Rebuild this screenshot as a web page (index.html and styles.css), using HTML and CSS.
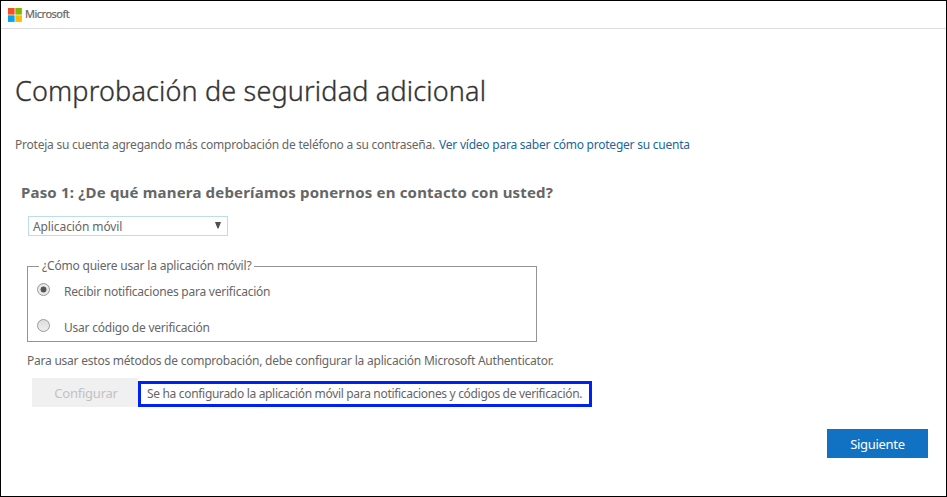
FILE: index.html
```html
<!DOCTYPE html>
<html lang="es">
<head>
<meta charset="utf-8">
<title>Comprobación de seguridad adicional</title>
<link rel="stylesheet" href="styles.css">
</head>
<body>
<div class="page">
  <header class="header">
    <svg class="logo" viewBox="0 0 14 14" aria-hidden="true">
      <path fill="#f25022" d="M0 0h6.6v6.6H0z"/>
      <path fill="#7fba00" d="M7.3 0h6.6v6.6H7.3z"/>
      <path fill="#00a4ef" d="M0 7.3h6.6v6.6H0z"/>
      <path fill="#ffb900" d="M7.3 7.3h6.6v6.6H7.3z"/>
    </svg>
    <span class="brand">Microsoft</span>
  </header>
  <main class="main">
    <h1 class="title"><span>Comprobación de seguridad adicional</span></h1>
    <p class="intro"><span class="intro-text">Proteja su cuenta agregando más comprobación de teléfono a su contraseña.</span><a class="link">Ver vídeo para saber cómo proteger su cuenta</a></p>
    <h2 class="step"><span>Paso 1: ¿De qué manera deberíamos ponernos en contacto con usted?</span></h2>
    <div class="select"><span class="select-text">Aplicación móvil</span>
      <svg class="arrow" viewBox="0 0 6 7"><path fill="#505050" d="M0 0h6L3.5 6.5h-1z"/></svg>
    </div>
    <fieldset class="options">
      <legend class="legend">¿Cómo quiere usar la aplicación móvil?</legend>
      <div class="option"><i class="radio radio-on"></i><span class="opt1">Recibir notificaciones para verificación</span></div>
      <div class="option"><i class="radio"></i><span class="opt2">Usar código de verificación</span></div>
    </fieldset>
    <p class="note"><span>Para usar estos métodos de comprobación, debe configurar la aplicación Microsoft Authenticator.</span></p>
    <div class="setup">
      <div class="configure"><span>Configurar</span></div>
      <div class="status"><span>Se ha configurado la aplicación móvil para notificaciones y códigos de verificación.</span></div>
    </div>
    <div class="next"><span>Siguiente</span></div>
  </main>
</div>
</body>
</html>
```
FILE: styles.css
```css
* { box-sizing: border-box; margin: 0; }
body { font: 12px/16px "Noto Sans", "Open Sans", sans-serif; color: #666; background: #fff; letter-spacing: -0.23px; }
span, a { white-space: nowrap; }
.page { width: 947px; height: 497px; border: 1px solid #000; overflow: hidden; }
.header { height: 28px; border-bottom: 1px solid #ddd; display: flex; align-items: center; padding-left: 7px; }
.logo { width: 14px; height: 14px; }
.brand { margin: -1px 0 0 3px; font-size: 11px; letter-spacing: -0.5px; color: #666; -webkit-text-stroke: 0.2px #666; }
.main { display: flex; flex-direction: column; padding: 0 18px 0 14px; }
.title { margin-top: 42px; height: 40px; font-size: 27px; line-height: 40px; font-weight: 300; letter-spacing: 0.16px; color: #333; -webkit-text-stroke: 0.35px #333; }
.intro { margin-top: 26px; height: 16px; display: flex; }
.link { margin-left: 4px; color: #1b6698; }
.step { margin: 28px 0 0 6px; height: 22px; font-size: 15px; line-height: 22px; font-weight: 700; letter-spacing: 0.18px; }
.select { width: 200px; height: 20px; margin: 13px 0 0 13px; border: 1px solid #bbdcf1; padding: 1px 6px 0 4px; display: flex; justify-content: space-between; align-items: center; }
.select-text { letter-spacing: -0.1px; }
.arrow { width: 6px; height: 7px; margin-bottom: 2px; }
.options { width: 510px; height: 84px; margin: 22px 0 0 12px; border: 1px solid #949494; padding: 0 0 0 9px; }
.legend { height: 16px; padding: 0 3px; margin-left: 2px; white-space: nowrap; letter-spacing: -0.2px; }
.option { height: 36px; display: flex; align-items: center; gap: 14px; }
.radio { width: 13px; height: 13px; border: 1px solid #999; border-radius: 50%; background: linear-gradient(#ddd, #eee); margin-bottom: 5px; }
.radio-on { background: radial-gradient(circle, #555 0 2.7px, #e8e8e8 3.3px); }
.note { margin: 11px 0 0 12px; height: 16px; }
.setup { display: flex; align-items: flex-end; margin: 9px 0 0 17px; height: 29px; }
.configure { width: 106px; height: 29px; background: #f0f0f0; color: #c2c2c2; font-size: 13px; line-height: 30px; text-align: center; padding-left: 2px; }
.status { width: 454px; height: 26px; border: 3px solid #0021f5; padding-left: 6px; line-height: 20px; letter-spacing: -0.32px; }
.next { width: 101px; height: 29px; margin-top: 22px; align-self: flex-end; background: #1172c3; color: #fff; font-size: 13px; line-height: 30px; text-align: center; letter-spacing: -0.3px; }
```
